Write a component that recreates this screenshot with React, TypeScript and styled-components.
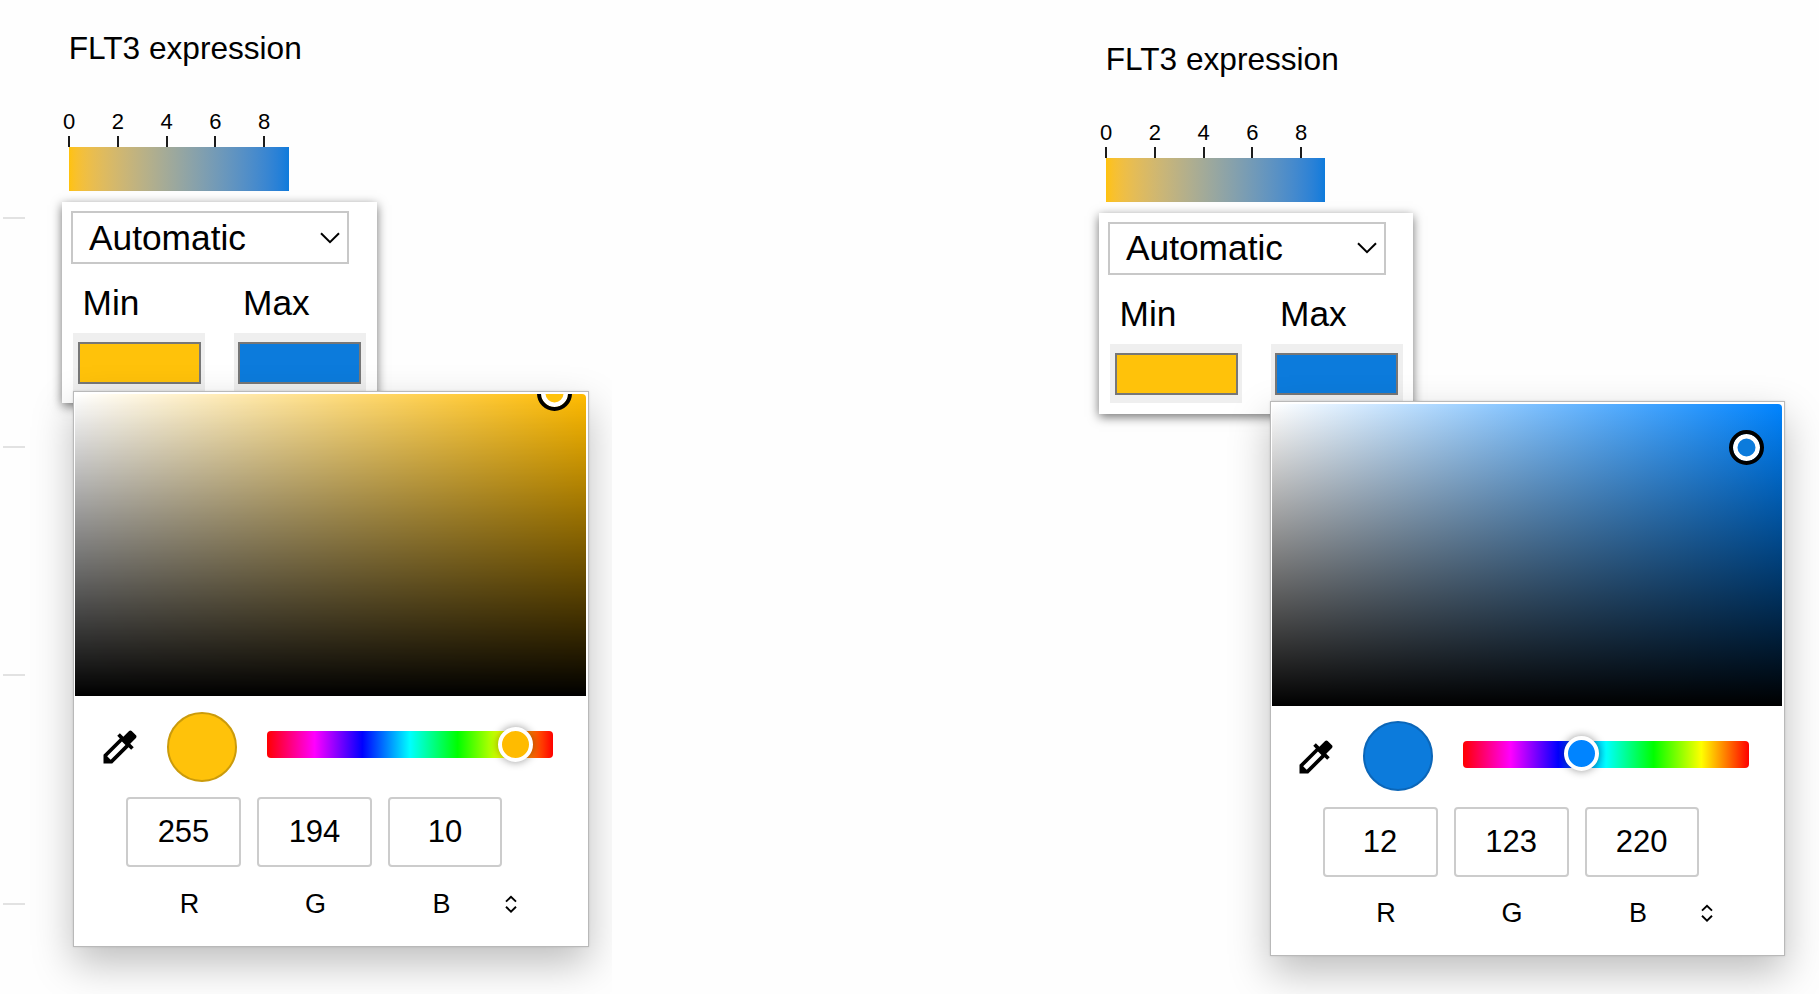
import React from "react";
import styled, { createGlobalStyle } from "styled-components";

const GlobalStyle = createGlobalStyle`
  *, *::before, *::after { box-sizing: border-box; }
  body {
    margin: 0;
    background: #fefefe;
    color: #000;
    font-family: "Liberation Sans", Arial, Helvetica, sans-serif;
  }
`;

const Page = styled.main`
  display: grid;
  grid-template-columns: 612px 782px;
  justify-content: space-between;
  width: 1819px;
  height: 994px;
  overflow: hidden;
`;

const Pane = styled.section<{ $top: number }>`
  position: relative;
  overflow: hidden;
  height: 994px;
  padding: ${(p) => p.$top}px 0 0 62px;
`;

const GridLines = styled.div`
  position: absolute;
  left: 3px;
  top: 217px;
  display: flex;
  flex-direction: column;
  gap: 226.5px;
`;

const GridLine = styled.span`
  width: 22px;
  height: 2px;
  background: #e2e2e2;
`;

const Title = styled.h1`
  margin: 0 0 44px 6.8px;
  font-size: 31.6px;
  font-weight: 400;
  line-height: 35px;
  white-space: nowrap;
`;

const Axis = styled.div`
  display: flex;
  margin-left: -17.4px;
`;

const Tick = styled.div`
  display: flex;
  flex-direction: column;
  align-items: center;
  gap: 2px;
  width: 48.8px;
  font-size: 22px;
  line-height: 24px;
`;

const TickMark = styled.i`
  width: 2px;
  height: 11px;
  background: #1c1c1c;
`;

const Ramp = styled.div<{ $width: number }>`
  width: ${(p) => p.$width}px;
  height: 44px;
  margin: 0 0 11px 7px;
  background: linear-gradient(to right in oklab, #ffc20a, #0c7bdc);
`;

const Settings = styled.div<{ $width: number }>`
  width: ${(p) => p.$width}px;
  height: 201px;
  padding: 9px;
  background: #fff;
  box-shadow: 0 3px 10px rgba(0, 0, 0, 0.55);
`;

const Select = styled.div`
  display: flex;
  align-items: center;
  justify-content: space-between;
  width: 278px;
  height: 53px;
  padding: 0 7px 0 16px;
  border: 2px solid #c8c8c8;
  font-size: 35.3px;
  line-height: 40px;
`;

const Bounds = styled.div`
  display: flex;
  gap: 28.5px;
  padding: 19px 0 0 2px;
`;

const Bound = styled.div`
  width: 132px;
`;

const BoundLabel = styled.div`
  padding-left: 9.5px;
  font-size: 35.3px;
  line-height: 40px;
`;

const Well = styled.div`
  height: 59px;
  margin-top: 10px;
  padding: 9px 4.5px 8px;
  background: #efefef;
`;

const WellColor = styled.div<{ $color: string }>`
  height: 42px;
  border: 2px solid #777;
  background: ${(p) => p.$color};
`;

const Picker = styled.div<{ $left: number; $top: number; $width: number; $height: number }>`
  position: absolute;
  left: ${(p) => p.$left}px;
  top: ${(p) => p.$top}px;
  width: ${(p) => p.$width}px;
  height: ${(p) => p.$height}px;
  border: 1px solid #b9b9b9;
  background: #fff;
  box-shadow: 0 17px 38px rgba(0, 0, 0, 0.25), 0 0 2px rgba(0, 0, 0, 0.12);
`;

const Field = styled.div<{ $hue: string; $height: number }>`
  position: relative;
  overflow: hidden;
  height: ${(p) => p.$height}px;
  margin: 1.5px 1.5px 0;
  border-radius: 4px 4px 0 0;
  background: linear-gradient(to top, #000, rgba(0, 0, 0, 0)),
    linear-gradient(to right, #fff, ${(p) => p.$hue});
`;

const FieldHandle = styled.div<{ $x: number; $y: number; $color: string }>`
  position: absolute;
  left: ${(p) => p.$x}px;
  top: ${(p) => p.$y}px;
  width: 35px;
  height: 35px;
  margin: -17.5px 0 0 -17.5px;
  border: 4px solid #000;
  border-radius: 50%;
  background: ${(p) => p.$color};
  box-shadow: inset 0 0 0 4.5px #fff;
`;

const Body = styled.div<{ $inset: number }>`
  padding-left: ${(p) => p.$inset}px;
`;

const Controls = styled.div`
  display: flex;
  align-items: flex-start;
  padding: 15px 0 0 23.5px;
`;

const Dropper = styled.svg`
  width: 44px;
  height: 44px;
  margin-top: 14px;
`;

const Swatch = styled.div<{ $color: string; $edge: string }>`
  width: 70px;
  height: 70px;
  margin: 0.5px 0 0 25px;
  border: 2px solid ${(p) => p.$edge};
  border-radius: 50%;
  background: ${(p) => p.$color};
`;

const Hue = styled.div`
  position: relative;
  width: 286px;
  height: 27px;
  margin: 20px 0 0 30px;
  border-radius: 4px;
  background: linear-gradient(to left, #f00, #ff0, #0f0, #0ff, #00f, #f0f, #f00);
`;

const HueThumb = styled.div<{ $x: number; $color: string }>`
  position: absolute;
  left: ${(p) => p.$x}px;
  top: -4.5px;
  width: 35px;
  height: 35px;
  margin-left: -17.5px;
  border: 4px solid #fff;
  border-radius: 50%;
  background: ${(p) => p.$color};
  box-shadow: 0 0 8px rgba(0, 0, 0, 0.4);
`;

const Channels = styled.div`
  display: flex;
  gap: 16px;
  padding: 15.5px 0 0 52px;
`;

const ChannelValue = styled.div`
  width: 115px;
  height: 70px;
  border: 2px solid #ccc;
  border-radius: 4px;
  font-size: 31px;
  line-height: 65px;
  text-align: center;

  &:last-child { width: 114px; }
`;

const ChannelNames = styled.div`
  display: flex;
  align-items: center;
  padding: 20.5px 0 0 52.5px;
`;

const ChannelName = styled.div`
  width: 126px;
  font-size: 27px;
  line-height: 32px;
  text-align: center;
`;

const Stepper = styled.svg`
  width: 12px;
  height: 18px;
`;

const MIN = "#ffc20a";
const MAX = "#0c7bdc";

type PickerData = {
  left: number;
  top: number;
  width: number;
  height: number;
  fieldHeight: number;
  inset: number;
  hue: string;
  color: string;
  edge: string;
  handle: [number, number];
  thumb: number;
  rgb: number[];
};

function ColorPicker({ data }: { data: PickerData }) {
  return (
    <Picker $left={data.left} $top={data.top} $width={data.width} $height={data.height}>
      <Field $hue={data.hue} $height={data.fieldHeight}>
        <FieldHandle $x={data.handle[0]} $y={data.handle[1]} $color={data.color} />
      </Field>
      <Body $inset={data.inset}>
        <Controls>
          <Dropper viewBox="0 0 24 24">
            <path d="M20.71 5.63l-2.34-2.34c-.39-.39-1.02-.39-1.41 0l-3.12 3.12-1.93-1.91-1.41 1.41 1.42 1.42L3 16.25V21h4.75l8.92-8.92 1.42 1.42 1.41-1.41-1.92-1.92 3.12-3.12c.4-.4.4-1.03.01-1.42zM6.92 19L5 17.08l8.06-8.06 1.92 1.92L6.92 19z" />
          </Dropper>
          <Swatch $color={data.color} $edge={data.edge} />
          <Hue>
            <HueThumb $x={data.thumb} $color={data.hue} />
          </Hue>
        </Controls>
        <Channels>
          {data.rgb.map((value, i) => (
            <ChannelValue key={i}>{value}</ChannelValue>
          ))}
        </Channels>
        <ChannelNames>
          {["R", "G", "B"].map((name) => (
            <ChannelName key={name}>{name}</ChannelName>
          ))}
          <Stepper viewBox="0 0 12 18" fill="none" stroke="#000" strokeWidth="1.9">
            <path d="M1 6.6 6 1.8l5 4.8M1 11.8l5 4.8 5-4.8" />
          </Stepper>
        </ChannelNames>
      </Body>
    </Picker>
  );
}

function Legend({ rampWidth, panelWidth }: { rampWidth: number; panelWidth: number }) {
  return (
    <>
      <Title>FLT3 expression</Title>
      <Axis>
        {[0, 2, 4, 6, 8].map((n) => (
          <Tick key={n}>
            {n}
            <TickMark />
          </Tick>
        ))}
      </Axis>
      <Ramp $width={rampWidth} />
      <Settings $width={panelWidth}>
        <Select>
          <span>Automatic</span>
          <svg width="20" height="12" viewBox="0 0 20 12" fill="none" stroke="#000" strokeWidth="2">
            <path d="M1 1.2 10 10.2 19 1.2" />
          </svg>
        </Select>
        <Bounds>
          <Bound>
            <BoundLabel>Min</BoundLabel>
            <Well><WellColor $color={MIN} /></Well>
          </Bound>
          <Bound>
            <BoundLabel>Max</BoundLabel>
            <Well><WellColor $color={MAX} /></Well>
          </Bound>
        </Bounds>
      </Settings>
    </>
  );
}

const minPicker: PickerData = {
  left: 72.5, top: 391, width: 516, height: 556, fieldHeight: 302.5, inset: 0.5,
  hue: "#ffbb00", color: MIN, edge: "#cb9b0b", handle: [479.8, 0.3],
  thumb: 248.5, rgb: [255, 194, 10],
};

const maxPicker: PickerData = {
  left: 232.6, top: 401, width: 515, height: 555, fieldHeight: 302, inset: 0,
  hue: "#0084ff", color: MAX, edge: "#0b66b8", handle: [474.4, 44],
  thumb: 118.5, rgb: [12, 123, 220],
};

export default function App() {
  return (
    <>
      <GlobalStyle />
      <Page>
        <Pane $top={31}>
          <GridLines>
            <GridLine />
            <GridLine />
            <GridLine />
            <GridLine />
          </GridLines>
          <Legend rampWidth={220} panelWidth={315} />
          <ColorPicker data={minPicker} />
        </Pane>
        <Pane $top={41.6}>
          <Legend rampWidth={219} panelWidth={314} />
          <ColorPicker data={maxPicker} />
        </Pane>
      </Page>
    </>
  );
}
